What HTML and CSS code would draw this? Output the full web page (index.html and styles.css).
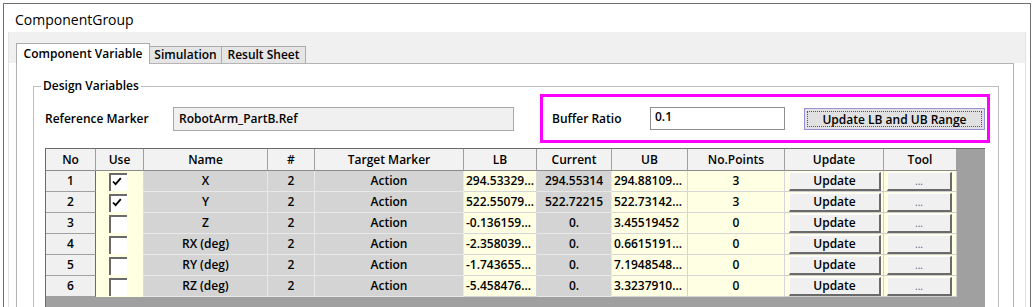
FILE: index.html
```html
<!DOCTYPE html>
<html lang="en">
<head>
    <meta charset="UTF-8">
    <title>ComponentGroup</title>
    <link rel="stylesheet" href="styles.css">
</head>
<body>
    <div class="window">
        <div class="title">ComponentGroup</div>
        <div class="tabctl">
            <div class="tabstrip">
                <div class="tab active">Component Variable</div>
                <div class="tab sim">Simulation</div>
                <div class="tab result">Result Sheet</div>
            </div>
            <div class="page">
                <fieldset class="group">
                    <legend>Design Variables</legend>
                    <div class="toprow">
                        <div class="label ref-label">Reference Marker</div>
                        <div class="refbox">RobotArm_PartB.Ref</div>
                        <div class="highlight">
                            <div class="label buf-label">Buffer Ratio</div>
                            <div class="bufbox">0.1</div>
                            <div class="rangebtn"><span>Update LB and UB Range</span></div>
                        </div>
                    </div>
                    <div class="grid">
                        <div class="row head">
                            <div class="cell">No</div>
                            <div class="cell">Use</div>
                            <div class="cell">Name</div>
                            <div class="cell">#</div>
                            <div class="cell">Target Marker</div>
                            <div class="cell">LB</div>
                            <div class="cell">Current</div>
                            <div class="cell">UB</div>
                            <div class="cell">No.Points</div>
                            <div class="cell">Update</div>
                            <div class="cell">Tool</div>
                        </div>
                        <div id="rows"></div>
                    </div>
                </fieldset>
            </div>
        </div>
    </div>
    <script>
        const data = [
            ['1', true, 'X', '294.53329...', '294.55314', '294.88109...', '3'],
            ['2', true, 'Y', '522.55079...', '522.72215', '522.73142...', '3'],
            ['3', false, 'Z', '-0.136159...', '0.', '3.45519452', '0'],
            ['4', false, 'RX (deg)', '-2.358039...', '0.', '0.6615191...', '0'],
            ['5', false, 'RY (deg)', '-1.743655...', '0.', '7.1948548...', '0'],
            ['6', false, 'RZ (deg)', '-5.458476...', '0.', '3.3237910...', '0']
        ];
        const check = '<svg width="10" height="9" viewBox="0 0 10 9"><path d="M1 4.5 L3.6 7.2 L8.8 1.2" fill="none" stroke="#000" stroke-width="1.8"/></svg>';
        let html = '';
        data.forEach(d => {
            html += '<div class="row">' +
                '<div class="cell no">' + d[0] + '</div>' +
                '<div class="cell use"><span class="chk">' + (d[1] ? check : '') + '</span></div>' +
                '<div class="cell ro">' + d[2] + '</div>' +
                '<div class="cell ro">2</div>' +
                '<div class="cell ro">Action</div>' +
                '<div class="cell ed num">' + d[3] + '</div>' +
                '<div class="cell ro">' + d[4] + '</div>' +
                '<div class="cell ed num">' + d[5] + '</div>' +
                '<div class="cell ed">' + d[6] + '</div>' +
                '<div class="cell btncell upd"><span class="btn">Update</span></div>' +
                '<div class="cell btncell tool"><span class="btn dots">...</span></div>' +
                '</div>';
        });
        document.getElementById('rows').innerHTML = html;
    </script>
</body>
</html>
```

FILE: styles.css
```css
body {
    margin: 0;
    background-color: #ffffff;
    font-family: "Open Sans", "Noto Sans", sans-serif;
    font-size: 12px;
    color: #000000;
}
.window {
    margin: 3px 3px 0 3px;
    height: 304px;
    border: 1px solid #707070;
    border-bottom: none;
    overflow: hidden;
    box-sizing: border-box;
}
.title {
    height: 28px;
    padding: 4px 0 0 11px;
    line-height: 24px;
    font-size: 14px;
    box-sizing: border-box;
}
.tabctl {
    margin: 0 4px;
    height: 300px;
    border-left: 1px solid #e2e2e2;
    border-right: 1px solid #e2e2e2;
    background-color: #ffffff;
}
.tabstrip {
    display: flex;
    align-items: flex-end;
    height: 31px;
    padding-left: 7px;
    background-color: #f0f0f0;
}
.tab {
    box-sizing: border-box;
    border: 1px solid #acacac;
    border-bottom: none;
    text-align: center;
    font-weight: 600;
}
.tab.active {
    position: relative;
    z-index: 1;
    width: 134px;
    height: 21px;
    line-height: 20px;
    margin-bottom: -1px;
    background-color: #ffffff;
}
.tab.sim,
.tab.result {
    height: 17px;
    line-height: 16px;
    background-color: #e5e5e5;
    border-left: none;
}
.tab.sim {
    width: 72px;
}
.tab.result {
    width: 84px;
}
.page {
    margin: 0 11px 0 7px;
    height: 260px;
    border: 1px solid #b4b4b4;
    background-color: #ffffff;
}
.group {
    margin: 14px 14px 0 16px;
    padding: 0 0 0 11px;
    border: 1px solid #bcbcbc;
    min-width: 0;
}
.group legend {
    margin-left: -4px;
    padding: 0 2px;
    line-height: 16px;
    font-weight: 600;
}
.toprow {
    display: flex;
    align-items: center;
    height: 49px;
}
.label {
    font-weight: 600;
    flex-shrink: 0;
}
.ref-label {
    width: 128px;
}
.refbox {
    width: 341px;
    height: 24px;
    box-sizing: border-box;
    padding-left: 5px;
    line-height: 21px;
    border: 1px solid #a8a8a8;
    background-color: #f0f0f0;
    font-weight: 600;
}
.highlight {
    display: flex;
    align-items: center;
    margin-left: 26px;
    width: 450px;
    height: 49px;
    box-sizing: border-box;
    padding-left: 9px;
    border: 3px solid #ff00ff;
}
.buf-label {
    width: 98px;
}
.bufbox {
    width: 135px;
    height: 23px;
    box-sizing: border-box;
    padding-left: 4px;
    line-height: 18px;
    border: 1px solid #8f8f8f;
    background-color: #ffffff;
    font-weight: 600;
}
.rangebtn {
    margin-left: 19px;
    width: 181px;
    height: 22px;
    box-sizing: border-box;
    padding: 2px;
    border: 1px solid #9b8fd4;
    background-color: #e1e1e1;
}
.rangebtn span {
    display: block;
    height: 16px;
    line-height: 15px;
    border: 1px dotted #555555;
    box-sizing: border-box;
    text-align: center;
    font-weight: 600;
}
.grid {
    margin: 5px 0 0 0;
    width: 940px;
    height: 170px;
    box-sizing: border-box;
    border-top: 1px solid #6a6a6a;
    border-left: 1px solid #6a6a6a;
    background-color: #a0a0a0;
    font-weight: 600;
}
.row {
    display: grid;
    grid-template-columns: 50px 48px 124px 47px 149px 73px 75px 76px 97px 99px 73px;
    height: 21px;
}
.row.head {
    height: 22px;
}
.cell {
    box-sizing: border-box;
    border-right: 1px solid #e8e8e8;
    border-bottom: 1px solid #e8e8e8;
    text-align: center;
    line-height: 20px;
    white-space: nowrap;
    overflow: hidden;
}
.head .cell {
    background-color: #f2f2f2;
    border-right: 1px solid #a0a0a0;
    border-bottom: 1px solid #8c8c8c;
    line-height: 21px;
}
.cell.no {
    background-color: #f0f0f0;
    border-right: 1px solid #6a6a6a;
    border-bottom: 1px solid #a0a0a0;
}
.cell.use {
    background-color: #ffffe1;
    border-right-color: #dcdcc8;
    border-bottom-color: #ffffe1;
}
.chk {
    display: block;
    margin: 2px 0 0 13px;
    width: 18px;
    height: 18px;
    box-sizing: border-box;
    border-top: 2px solid #6a6a6a;
    border-left: 2px solid #6a6a6a;
    background-color: #ffffff;
    line-height: 0;
    text-align: left;
}
.chk svg {
    margin: 2px 0 0 1px;
}
.cell.ro {
    background-color: #d4d4d4;
}
.cell.ed {
    background-color: #ffffe3;
    border-right-color: #d6d6d6;
    border-bottom-color: #d6d6d6;
}
.cell.num {
    text-align: left;
    padding-left: 2px;
}
.cell.btncell {
    background-color: #ffffe3;
    border-right-color: #cfcfcf;
    border-bottom-color: #cfcfcf;
}
.cell.upd {
    padding: 1px 2px 0 4px;
}
.cell.tool {
    padding: 1px 4px 0 3px;
}
.btn {
    display: block;
    height: 19px;
    box-sizing: border-box;
    border-top: 1px solid #ffffff;
    border-left: 1px solid #ffffff;
    border-right: 2px solid #6a6a6a;
    border-bottom: 2px solid #6a6a6a;
    background-color: #f0f0f0;
    line-height: 16px;
    text-align: center;
}
.btn.dots {
    color: #5a5a8c;
    font-size: 10px;
    font-weight: 400;
}
```
